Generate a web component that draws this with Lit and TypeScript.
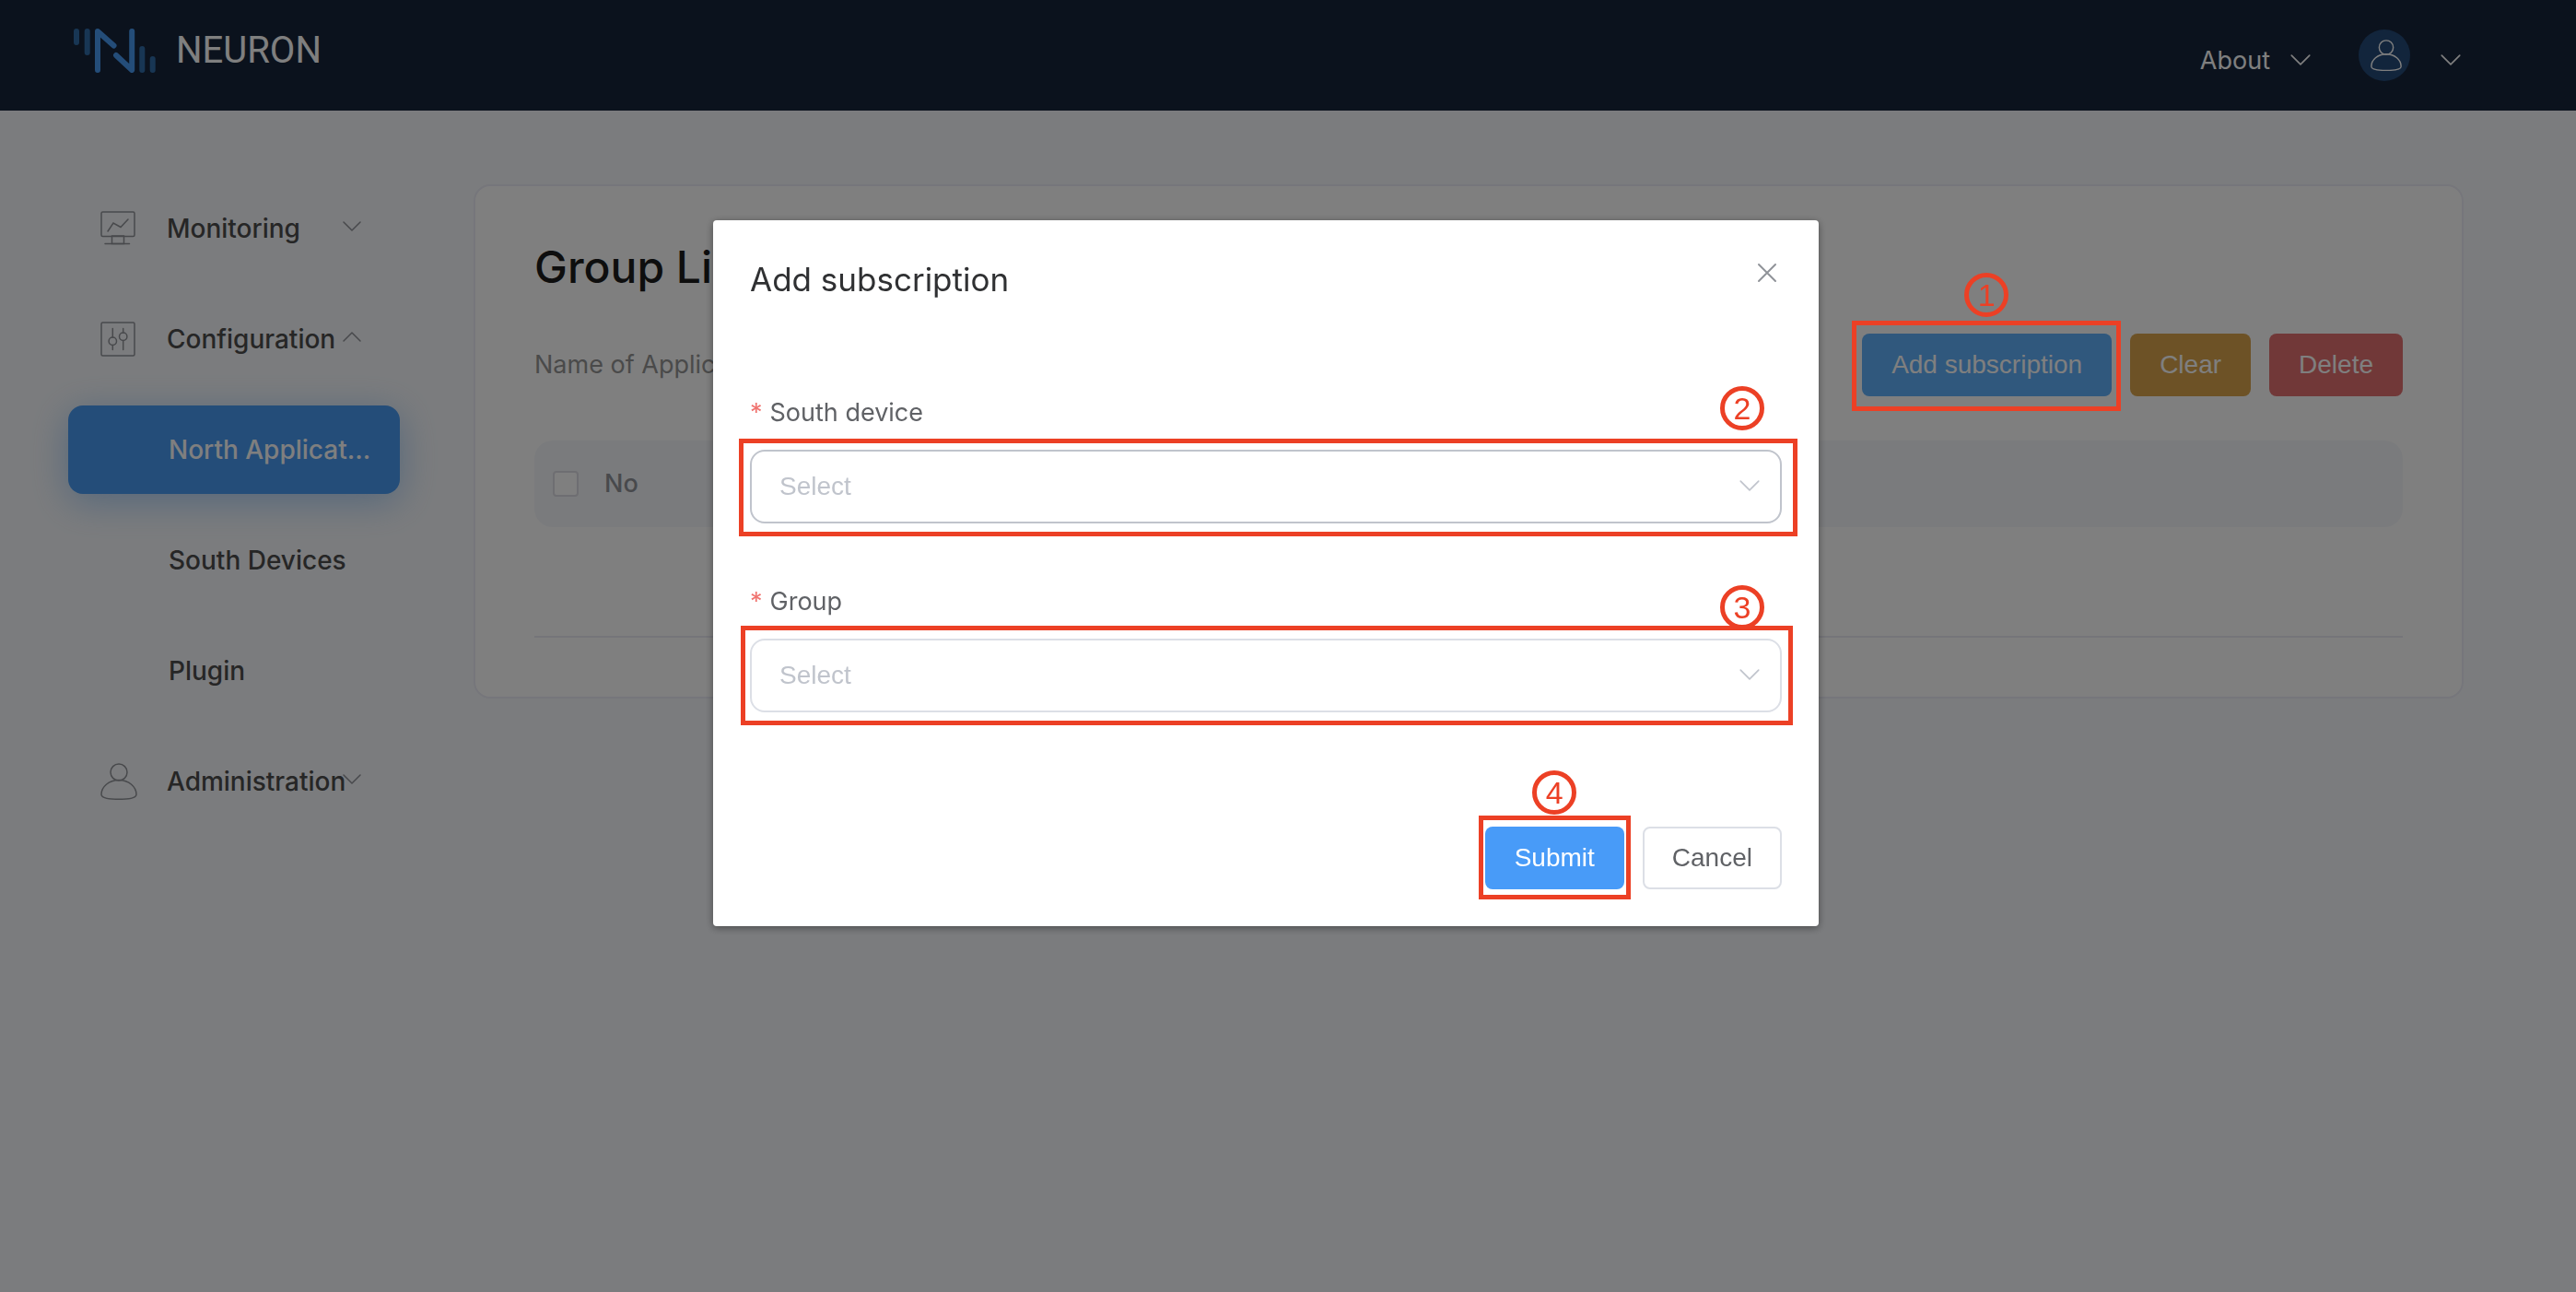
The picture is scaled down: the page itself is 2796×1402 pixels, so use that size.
import { LitElement, html, svg, css } from "lit";
import { customElement, property } from "lit/decorators.js";
import { classMap } from "lit/directives/class-map.js";

const chevronDown = html`<svg class="chevron" viewBox="0 0 20 12" aria-hidden="true">
  <path d="M1 1 L10 10 L19 1" fill="none" stroke="currentColor" stroke-width="1.5" stroke-linecap="round" stroke-linejoin="round" />
</svg>`;

const chevronUp = html`<svg class="chevron" viewBox="0 0 20 12" aria-hidden="true">
  <path d="M1 10 L10 1 L19 10" fill="none" stroke="currentColor" stroke-width="1.5" stroke-linecap="round" stroke-linejoin="round" />
</svg>`;

const userShape = svg`
  <circle cx="20" cy="10" r="9" />
  <path d="M20 18.5 C9 18.5 1 26 1 34 C1 38 9 39.3 20 39.3 C31 39.3 39 38 39 34 C39 26 31 18.5 20 18.5 Z" />`;

const monitorShape = svg`
  <rect x="1" y="1" width="36" height="26.500" rx="1.500" />
  <path d="M8 22 L14 13 L22 17.500 L30 9" stroke-linecap="round" />
  <rect x="12.500" y="27" width="13" height="8.500" />
  <path d="M5 35.500 H31.500" stroke-linecap="round" />`;

const slidersShape = svg`
  <rect x="1" y="1" width="36" height="36" rx="1.500" />
  <path d="M13.300 7.500 V17 M13.300 25.500 V30.500 M24.700 7.500 V12 M24.700 20.500 V30.500" stroke-linecap="round" />
  <circle cx="13.300" cy="21.300" r="4.200" />
  <circle cx="24.700" cy="16.200" r="4.200" />`;

/** A numbered circle with a frame that outlines the control it sits in. */
@customElement("step-mark")
export class StepMark extends LitElement {
  @property({ type: Number }) step = 1;

  static styles = css`
    :host {
      position: absolute;
      z-index: 30;
      box-sizing: border-box;
      border: 5px solid #ec4025;
      pointer-events: none;
    }
    .badge {
      position: absolute;
      left: var(--badge-left, 50%);
      top: var(--badge-top, -57px);
      margin-left: -24px;
      box-sizing: border-box;
      width: 48px;
      height: 48px;
      border: 5px solid #ec4025;
      border-radius: 50%;
      color: #ec4025;
      font: 34px/38px "Liberation Sans", Arial, sans-serif;
      text-align: center;
    }
  `;

  render() {
    return html`<span class="badge">${this.step}</span>`;
  }
}

interface MenuEntry {
  label: string;
  icon?: unknown;
  iconSize?: number;
  open?: boolean;
  active?: boolean;
}

const menu: MenuEntry[] = [
  { label: "Monitoring", icon: monitorShape, iconSize: 38 },
  { label: "Configuration", icon: slidersShape, iconSize: 38, open: true },
  { label: "North Applicat…", active: true },
  { label: "South Devices" },
  { label: "Plugin" },
  { label: "Administration", icon: userShape, iconSize: 40 },
];

@customElement("app-root")
export class AppRoot extends LitElement {
  static styles = css`
    :host {
      display: block;
      min-height: 100vh;
      background: #f7f9fc;
      color: #4c4c4c;
      font: 27px/40px Inter, "Liberation Sans", sans-serif;
    }
    * {
      box-sizing: border-box;
    }
    button,
    select {
      font: 28px/40px "Liberation Sans", Arial, sans-serif;
      cursor: pointer;
    }
    svg {
      display: block;
      flex: none;
    }
    .chevron {
      width: 22px;
      height: 13px;
    }

    .topbar {
      display: flex;
      align-items: center;
      height: 120px;
      padding: 0 125px 0 80px;
      background: #16243a;
      color: #fff;
    }
    .brand {
      display: flex;
      align-items: center;
      gap: 21px;
      padding-bottom: 10px;
      color: inherit;
      text-decoration: none;
      font: 40px/48px Roboto, sans-serif;
    }
    .brand svg {
      width: 90px;
      height: 48px;
    }
    .account {
      display: flex;
      align-items: center;
      margin-left: auto;
    }
    .plain {
      display: flex;
      align-items: center;
      padding: 0;
      border: 0;
      background: none;
      color: inherit;
      font-family: Inter, sans-serif;
    }
    .about {
      gap: 22px;
      margin-right: 52px;
      padding-top: 11px;
      font-size: 27px;
    }
    .user {
      gap: 33px;
    }
    .user .chevron {
      margin-top: 10px;
    }
    .avatar {
      display: grid;
      place-items: center;
      width: 56px;
      height: 56px;
      padding-left: 4px;
      border-radius: 50%;
      background: #244a78;
    }
    .avatar svg {
      width: 34px;
      height: 34px;
    }

    .body {
      display: flex;
      align-items: flex-start;
    }
    .sidebar {
      flex: none;
      width: 434px;
      padding: 68px 0 0 74px;
    }
    .sidebar ul {
      margin: 0;
      padding: 0;
      list-style: none;
    }
    .sidebar li {
      display: flex;
      height: 120px;
      padding: 12px 0;
    }
    .entry {
      position: relative;
      display: flex;
      align-items: center;
      width: 100%;
      padding-left: 35px;
      border-radius: 16px;
      color: inherit;
      font-size: 28px;
      font-weight: 500;
      text-decoration: none;
      white-space: nowrap;
    }
    .entry.sub {
      padding-left: 109px;
    }
    .entry.active {
      background: #489af2;
      color: #fff;
      box-shadow: 0 8px 40px rgba(72, 154, 242, 0.45);
    }
    .entry-icon {
      width: 72px;
      color: #909399;
    }
    .entry .chevron {
      position: absolute;
      right: 42px;
      top: 40px;
      width: 20px;
      height: 12px;
      color: #909399;
    }

    .card {
      flex: 1;
      min-width: 0;
      margin: 80px 122px 0 80px;
      padding: 60px 64px 64px;
      border: 2px solid #ecedf6;
      border-radius: 18px;
      background: #fff;
    }
    h1 {
      margin: 0;
      color: #1c1c1c;
      font-size: 48px;
      font-weight: 500;
      line-height: 56px;
    }
    .toolbar {
      display: flex;
      align-items: center;
      justify-content: space-between;
      margin-top: 44px;
      color: #959595;
    }
    .actions {
      display: flex;
      gap: 20px;
    }
    .spot {
      position: relative;
      display: flex;
    }
    .btn {
      height: 68px;
      padding: 0 30px;
      border: 2px solid transparent;
      border-radius: 8px;
      color: #fff;
    }
    .btn.primary {
      background: #489bf8;
    }
    .btn.primary.hover {
      background: #60b0fa;
    }
    .btn.warning {
      background: #daa44c;
    }
    .btn.danger {
      background: #e27070;
    }
    .btn.default {
      border-color: #dcdfe6;
      background: #fff;
      color: #606266;
    }
    .frame-add {
      inset: -14px -10px -16px -11px;
      --badge-top: -57px;
    }

    table {
      width: 100%;
      margin-top: 48px;
      border-spacing: 0;
    }
    th {
      height: 94px;
      padding: 0;
      background: #f5f7fa;
      color: #909399;
      font: 500 27px/40px Inter, sans-serif;
      text-align: left;
    }
    th:first-child {
      width: 76px;
      padding-left: 20px;
      border-radius: 20px 0 0 20px;
    }
    th:last-child {
      border-radius: 0 20px 20px 0;
    }
    td {
      height: 120px;
      padding: 0;
      border-bottom: 2px solid #ebebf3;
    }
    th input {
      display: block;
      appearance: none;
      width: 28px;
      height: 28px;
      margin: 0;
      border: 2px solid #dcdce4;
      border-radius: 4px;
      background: #fff;
    }

    .overlay {
      position: fixed;
      inset: 0;
      z-index: 10;
      display: flex;
      align-items: flex-start;
      justify-content: center;
      padding: 239px 48px 0 0;
      background: rgba(0, 0, 0, 0.5);
    }
    .dialog {
      width: 1200px;
      max-width: 90%;
      padding: 39px 40px 40px;
      border-radius: 4px;
      background: #fff;
      box-shadow: 0 2px 8px rgba(0, 0, 0, 0.4);
    }
    .dialog-head {
      display: flex;
      justify-content: space-between;
      align-items: flex-start;
    }
    h2 {
      margin: 0;
      color: #303133;
      font-size: 35px;
      font-weight: 400;
      line-height: 50px;
    }
    .close {
      margin: 7px 5px 0 0;
      color: #909399;
    }
    .close svg {
      width: 22px;
      height: 22px;
    }
    form {
      margin-top: 100px;
    }
    .field {
      height: 205px;
      color: #606266;
    }
    .field label {
      display: block;
      height: 60px;
    }
    .required {
      margin-right: 8px;
      color: #f07470;
    }
    .control {
      position: relative;
      color: #c0c4cc;
    }
    select {
      display: block;
      appearance: none;
      width: 100%;
      height: 80px;
      padding: 0 30px;
      border: 2px solid #dcdfe6;
      border-radius: 16px;
      background: #fff;
      color: #c0c4cc;
    }
    .control.hover select {
      border-color: #c0c4cc;
    }
    .control .chevron {
      position: absolute;
      right: 24px;
      top: 33px;
      pointer-events: none;
    }
    .frame-device {
      inset: -12px -17px -14px -12px;
      --badge-left: 1084px;
      --badge-top: -62px;
    }
    .frame-group {
      inset: -14px -12px -14px -10px;
      --badge-left: 1082px;
      --badge-top: -49px;
    }
    .dialog-foot {
      display: flex;
      justify-content: flex-end;
      gap: 20px;
      margin-top: 59px;
    }
    .frame-submit {
      inset: -12px -7px -11px -7px;
      --badge-top: -54px;
    }
  `;

  private renderEntry(entry: MenuEntry) {
    const size = entry.iconSize ?? 0;
    return html`<li>
      <a
        href="#"
        class=${classMap({ entry: true, sub: !entry.icon, active: !!entry.active })}
      >
        ${entry.icon
          ? html`<span class="entry-icon">
              <svg width=${size} height=${size} viewBox="0 0 ${size} ${size}" fill="none" stroke="currentColor" stroke-width="1.5" aria-hidden="true">${entry.icon}</svg>
            </span>`
          : null}
        <span>${entry.label}</span>
        ${entry.icon ? (entry.open ? chevronUp : chevronDown) : null}
      </a>
    </li>`;
  }

  private renderSelect(id: string, label: string, hover: boolean, frame: string, step: number) {
    return html`<div class="field">
      <label for=${id}><span class="required">*</span>${label}</label>
      <div class=${classMap({ control: true, hover })}>
        <select id=${id} required>
          <option value="">Select</option>
        </select>
        ${chevronDown}
        <step-mark class=${frame} .step=${step}></step-mark>
      </div>
    </div>`;
  }

  render() {
    return html`
      <header class="topbar">
        <a class="brand" href="#">
          <svg viewBox="0 0 90 48" fill="none" stroke-width="6" stroke-linecap="round" stroke-linejoin="round" aria-hidden="true">
            <path stroke="#306ca8" d="M3 3 V15 M14.700 3 V26 M74.300 22 V45 M85.700 33 V45" />
            <path stroke="#489af2" d="M26 45 V3 L43.500 18.500 M46 29 L63.200 45 V3" />
          </svg>
          <span>NEURON</span>
        </a>
        <div class="account">
          <button class="plain about" type="button">About ${chevronDown}</button>
          <button class="plain user" type="button" aria-label="Account">
            <span class="avatar">
              <svg viewBox="0 0 40 40" fill="none" stroke="#fff" stroke-width="1.7" aria-hidden="true">${userShape}</svg>
            </span>
            ${chevronDown}
          </button>
        </div>
      </header>

      <div class="body">
        <nav class="sidebar">
          <ul>
            ${menu.map((entry) => this.renderEntry(entry))}
          </ul>
        </nav>
        <main class="card">
          <h1>Group List</h1>
          <div class="toolbar">
            <span>Name of Application</span>
            <div class="actions">
              <div class="spot">
                <button class="btn primary hover" type="button">Add subscription</button>
                <step-mark class="frame-add" .step=${1}></step-mark>
              </div>
              <button class="btn warning" type="button">Clear</button>
              <button class="btn danger" type="button">Delete</button>
            </div>
          </div>
          <table>
            <thead>
              <tr>
                <th><input type="checkbox" aria-label="Select all" /></th>
                <th>No</th>
              </tr>
            </thead>
            <tbody>
              <tr>
                <td colspan="2"></td>
              </tr>
            </tbody>
          </table>
        </main>
      </div>

      <div class="overlay">
        <section class="dialog" role="dialog" aria-modal="true" aria-labelledby="dialog-title">
          <div class="dialog-head">
            <h2 id="dialog-title">Add subscription</h2>
            <button class="plain close" type="button" aria-label="Close">
              <svg viewBox="0 0 22 22" fill="none" stroke="currentColor" stroke-width="2" stroke-linecap="round" aria-hidden="true">
                <path d="M2 2 L20 20 M20 2 L2 20" />
              </svg>
            </button>
          </div>
          <form>
            ${this.renderSelect("south-device", "South device", true, "frame-device", 2)}
            ${this.renderSelect("group", "Group", false, "frame-group", 3)}
            <div class="dialog-foot">
              <div class="spot">
                <button class="btn primary" type="button">Submit</button>
                <step-mark class="frame-submit" .step=${4}></step-mark>
              </div>
              <button class="btn default" type="button">Cancel</button>
            </div>
          </form>
        </section>
      </div>
    `;
  }
}
